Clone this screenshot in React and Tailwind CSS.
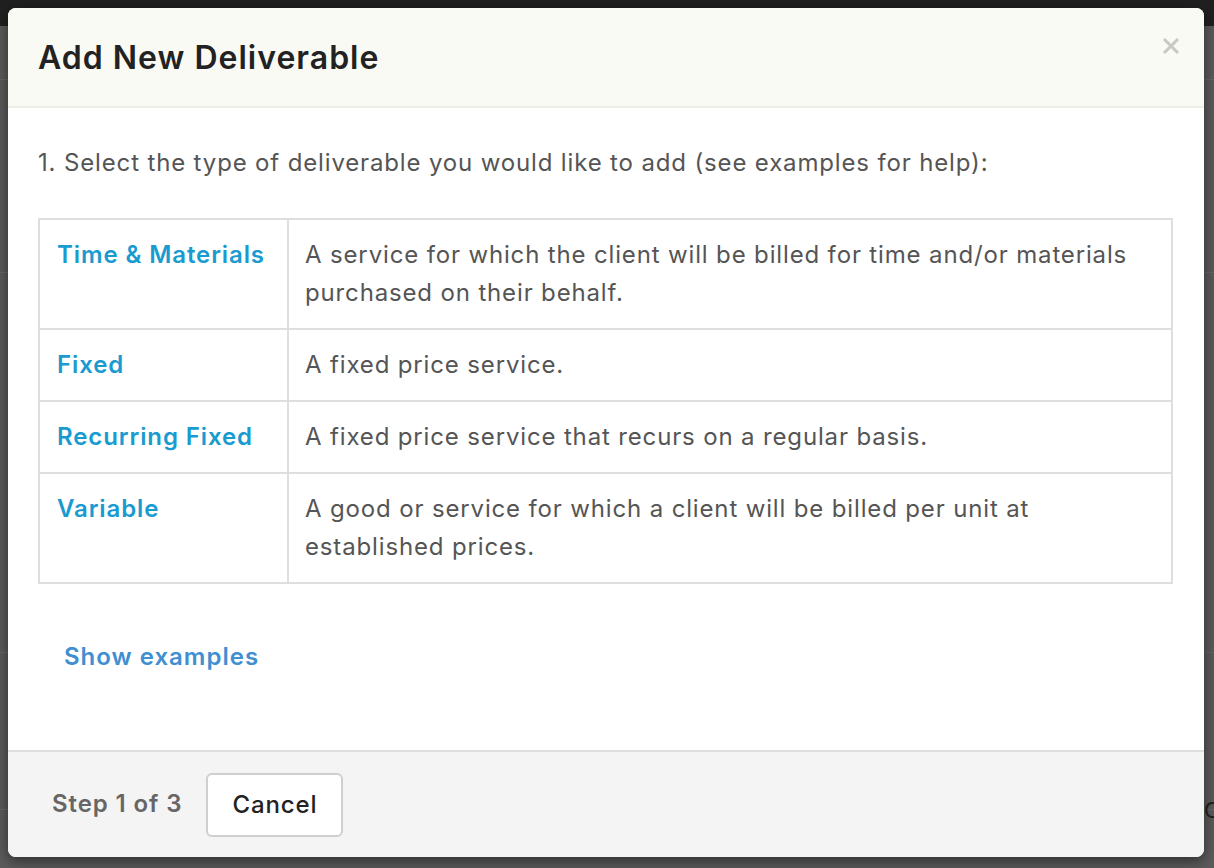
import React from 'react';

const types = [
  { name: 'Time & Materials', desc: 'A service for which the client will be billed for time and/or materials purchased on their behalf.' },
  { name: 'Fixed', desc: 'A fixed price service.' },
  { name: 'Recurring Fixed', desc: 'A fixed price service that recurs on a regular basis.' },
  { name: 'Variable', desc: 'A good or service for which a client will be billed per unit at established prices.' },
];

// page under the dimmed overlay, only hinted at
function Backdrop() {
  return (
    <div className="flex h-full flex-col bg-[#5b5b5b]">
      <div className="h-[26px] bg-[#202020]" />
      <div className="h-[54px] border-b border-[#666]" />
      <div className="h-[193px] border-b border-[#666]" />
      <div className="h-[380px] border-b border-[#666]" />
      <div className="flex h-[157px] justify-end border-b border-[#666]">
        <span className="mt-[146px] mr-[-6px] text-[22px] leading-none text-[#222]">C</span>
      </div>
    </div>
  );
}

export default function App() {
  return (
    <div
      className="relative h-[868px] w-[1214px] overflow-hidden"
      style={{ fontFamily: 'Inter, "Open Sans", sans-serif' }}
    >
      <Backdrop />

      {/* modal */}
      <div className="absolute left-[8px] top-[8px] flex h-[849px] w-[1196px] flex-col overflow-hidden rounded-[8px] bg-white shadow-[0_4px_14px_rgba(0,0,0,0.5)]">
        <div className="flex h-[100px] shrink-0 items-start justify-between border-b-2 border-[#efefea] bg-[#fafaf4] pl-[30px] pr-[24px]">
          <h1 className="mt-[29px] text-[32px] font-semibold leading-[42px] tracking-[1px] text-[#222]">Add New Deliverable</h1>
          <button className="mt-[29px] text-[#c8c8c4]">
            <svg width="18" height="18" viewBox="0 0 18 18" fill="none" stroke="currentColor" strokeWidth="3">
              <path d="M2 2 L16 16 M16 2 L2 16" />
            </svg>
          </button>
        </div>

        <div className="flex flex-1 flex-col px-[30px] pt-[36px] text-[24px] leading-[38px] tracking-[0.85px]">
          <p className="text-[#555]">
            1. Select the type of deliverable you would like to add (see examples for help):
          </p>
          <table className="mt-[36px] w-[1135px] border-collapse">
            <tbody>
              {types.map((t) => (
                <tr key={t.name}>
                  <td className="w-[249px] border-2 border-[#dedede] px-[17px] py-[16px] align-top font-semibold tracking-[0.9px] text-[#1a9bd0]">
                    {t.name}
                  </td>
                  <td className="border-2 border-[#dedede] px-[16px] py-[16px] align-top text-[#555]">
                    {t.desc}
                  </td>
                </tr>
              ))}
            </tbody>
          </table>
          <div className="mt-[54px] pl-[26px]">
            <a className="font-semibold tracking-[1px] text-[#3f8fd1]">Show examples</a>
          </div>
        </div>

        <div className="flex h-[107px] shrink-0 items-start gap-[24px] border-t-2 border-[#dedede] bg-[#f4f4f4] pl-[44px] pt-[21px] text-[24px] tracking-[0.9px]">
          <span className="mt-[13px] font-semibold text-[#666]">Step 1 of 3</span>
          <button className="h-[64px] w-[137px] rounded-[6px] border-2 border-[#cfcfcf] bg-white font-medium text-[#222]">
            Cancel
          </button>
        </div>
      </div>
    </div>
  );
}
